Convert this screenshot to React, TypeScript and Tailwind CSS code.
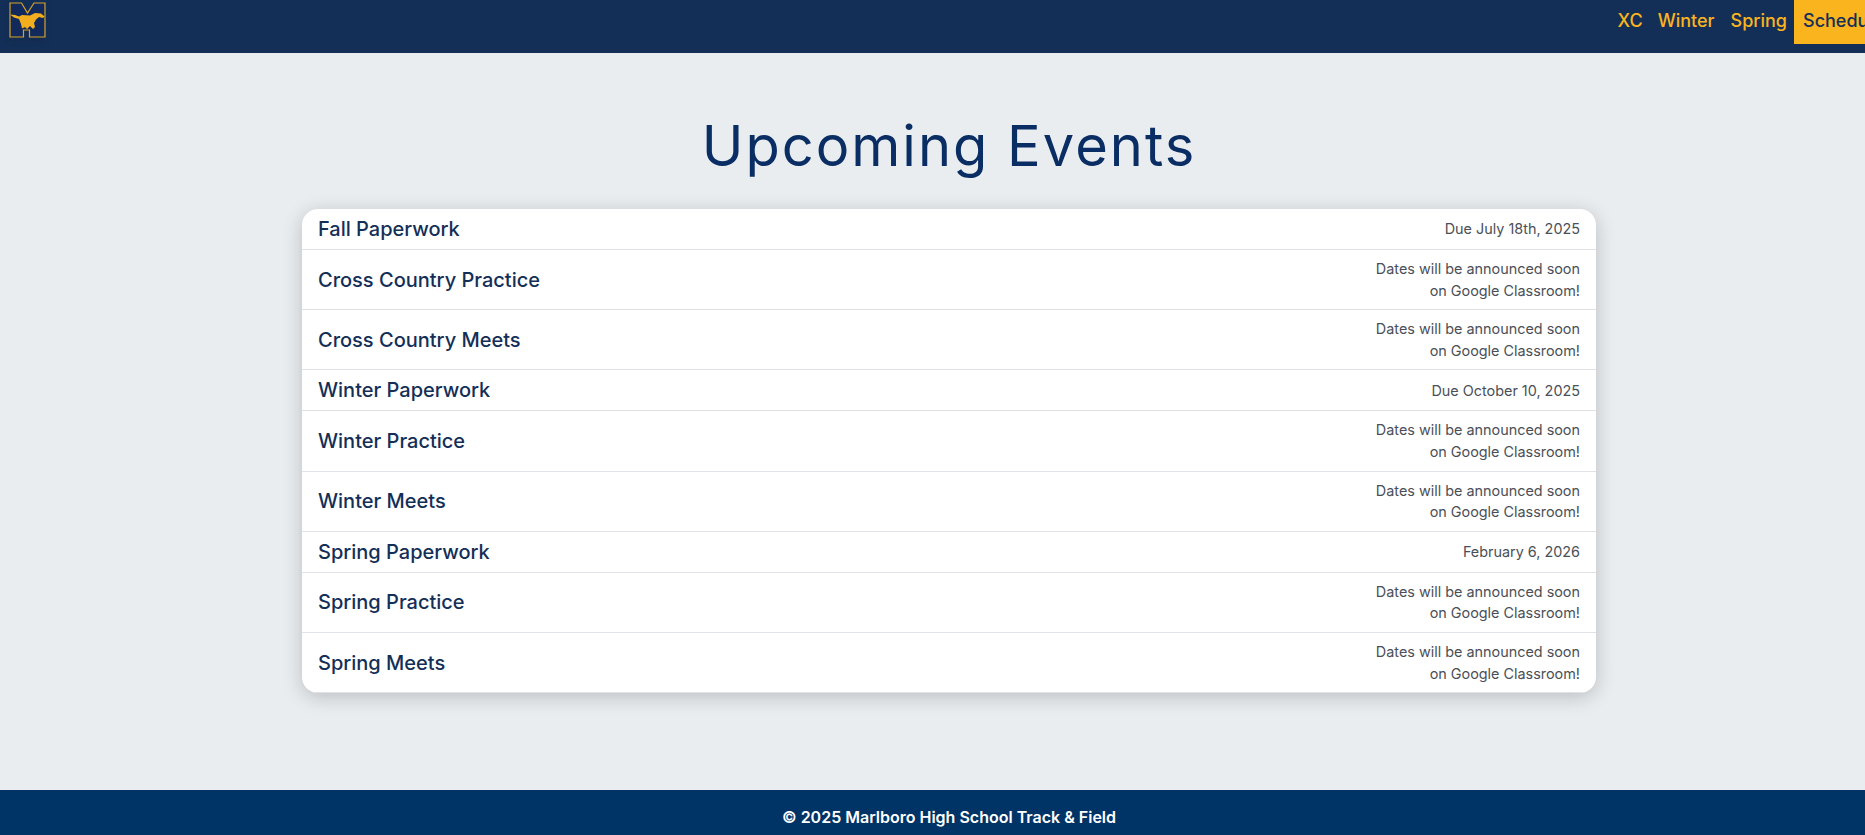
const events = [
  { name: "Fall Paperwork", date: ["Due July 18th, 2025"] },
  { name: "Cross Country Practice", date: ["Dates will be announced soon", "on Google Classroom!"] },
  { name: "Cross Country Meets", date: ["Dates will be announced soon", "on Google Classroom!"] },
  { name: "Winter Paperwork", date: ["Due October 10, 2025"] },
  { name: "Winter Practice", date: ["Dates will be announced soon", "on Google Classroom!"] },
  { name: "Winter Meets", date: ["Dates will be announced soon", "on Google Classroom!"] },
  { name: "Spring Paperwork", date: ["February 6, 2026"] },
  { name: "Spring Practice", date: ["Dates will be announced soon", "on Google Classroom!"] },
  { name: "Spring Meets", date: ["Dates will be announced soon", "on Google Classroom!"] },
];

function Logo() {
  return (
    <svg width="38" height="36" viewBox="0 0 38 36" className="drop-shadow-md">
      <path
        d="M1 1H12.5L18.5 11L25 1H36V35H20.5V28H14.5V35H1Z"
        fill="#12295c"
        stroke="#d6a22a"
        strokeWidth="1.2"
      />
      <path
        d="M1 12.5L6 13L10 14.5L13 13L21 13.5L26 11L32 11.5L35.5 14.5L34 16L30 15L27 17.5L25 21L26 25L24 27L21 24L18 27L16 25L13 26.5L12 22L10 17L5 15.5Z"
        fill="#f2ae1c"
      />
    </svg>
  );
}

export default function App() {
  return (
    <div className="h-screen overflow-hidden font-['Inter',sans-serif]">
      <div className="w-[1898px] h-[835px] flex flex-col bg-[#e9edf0]">
        <header className="h-[53px] bg-[#142f57] flex justify-between items-start shrink-0">
          <div className="pl-[9px] pt-[2px]">
            <Logo />
          </div>
          <nav className="flex items-start text-[18px] font-medium">
            <a className="h-11 pb-1 flex items-center pr-[15px] text-[#fab41e]">XC</a>
            <a className="h-11 pb-1 flex items-center pr-[16px] text-[#fab41e]">Winter</a>
            <a className="h-11 pb-1 flex items-center pr-[7px] text-[#fab41e]">Spring</a>
            <a className="h-11 pb-1 w-[104px] pl-[9px] flex items-center whitespace-nowrap bg-[#fab41e] text-[#142f57]">Schedule</a>
          </nav>
        </header>
        <main className="flex-1 flex flex-col items-center pt-[58px]">
          <h1 className="text-[56px] leading-[70px] text-[#0a2d63] tracking-[2px]">Upcoming Events</h1>
          <ul className="mt-[28px] w-[1294px] bg-white rounded-2xl shadow-[0_4px_20px_rgba(0,0,0,0.2)] overflow-hidden">
            {events.map((ev) => (
              <li
                key={ev.name}
                className="flex items-center justify-between px-4 py-2 border-b border-[#dfe2e6]"
              >
                <span className="text-[20px] leading-6 font-medium text-[#142f57]">{ev.name}</span>
                <span className="text-right text-[14.4px] leading-[21.6px] text-[#4b4f57]">
                  {ev.date.map((line) => (
                    <span key={line} className="block">{line}</span>
                  ))}
                </span>
              </li>
            ))}
          </ul>
        </main>
        <footer className="h-[45px] pt-[9px] bg-[#003366] flex items-center justify-center text-white font-semibold text-[16px] shrink-0">
          © 2025 Marlboro High School Track & Field
        </footer>
      </div>
    </div>
  );
}
